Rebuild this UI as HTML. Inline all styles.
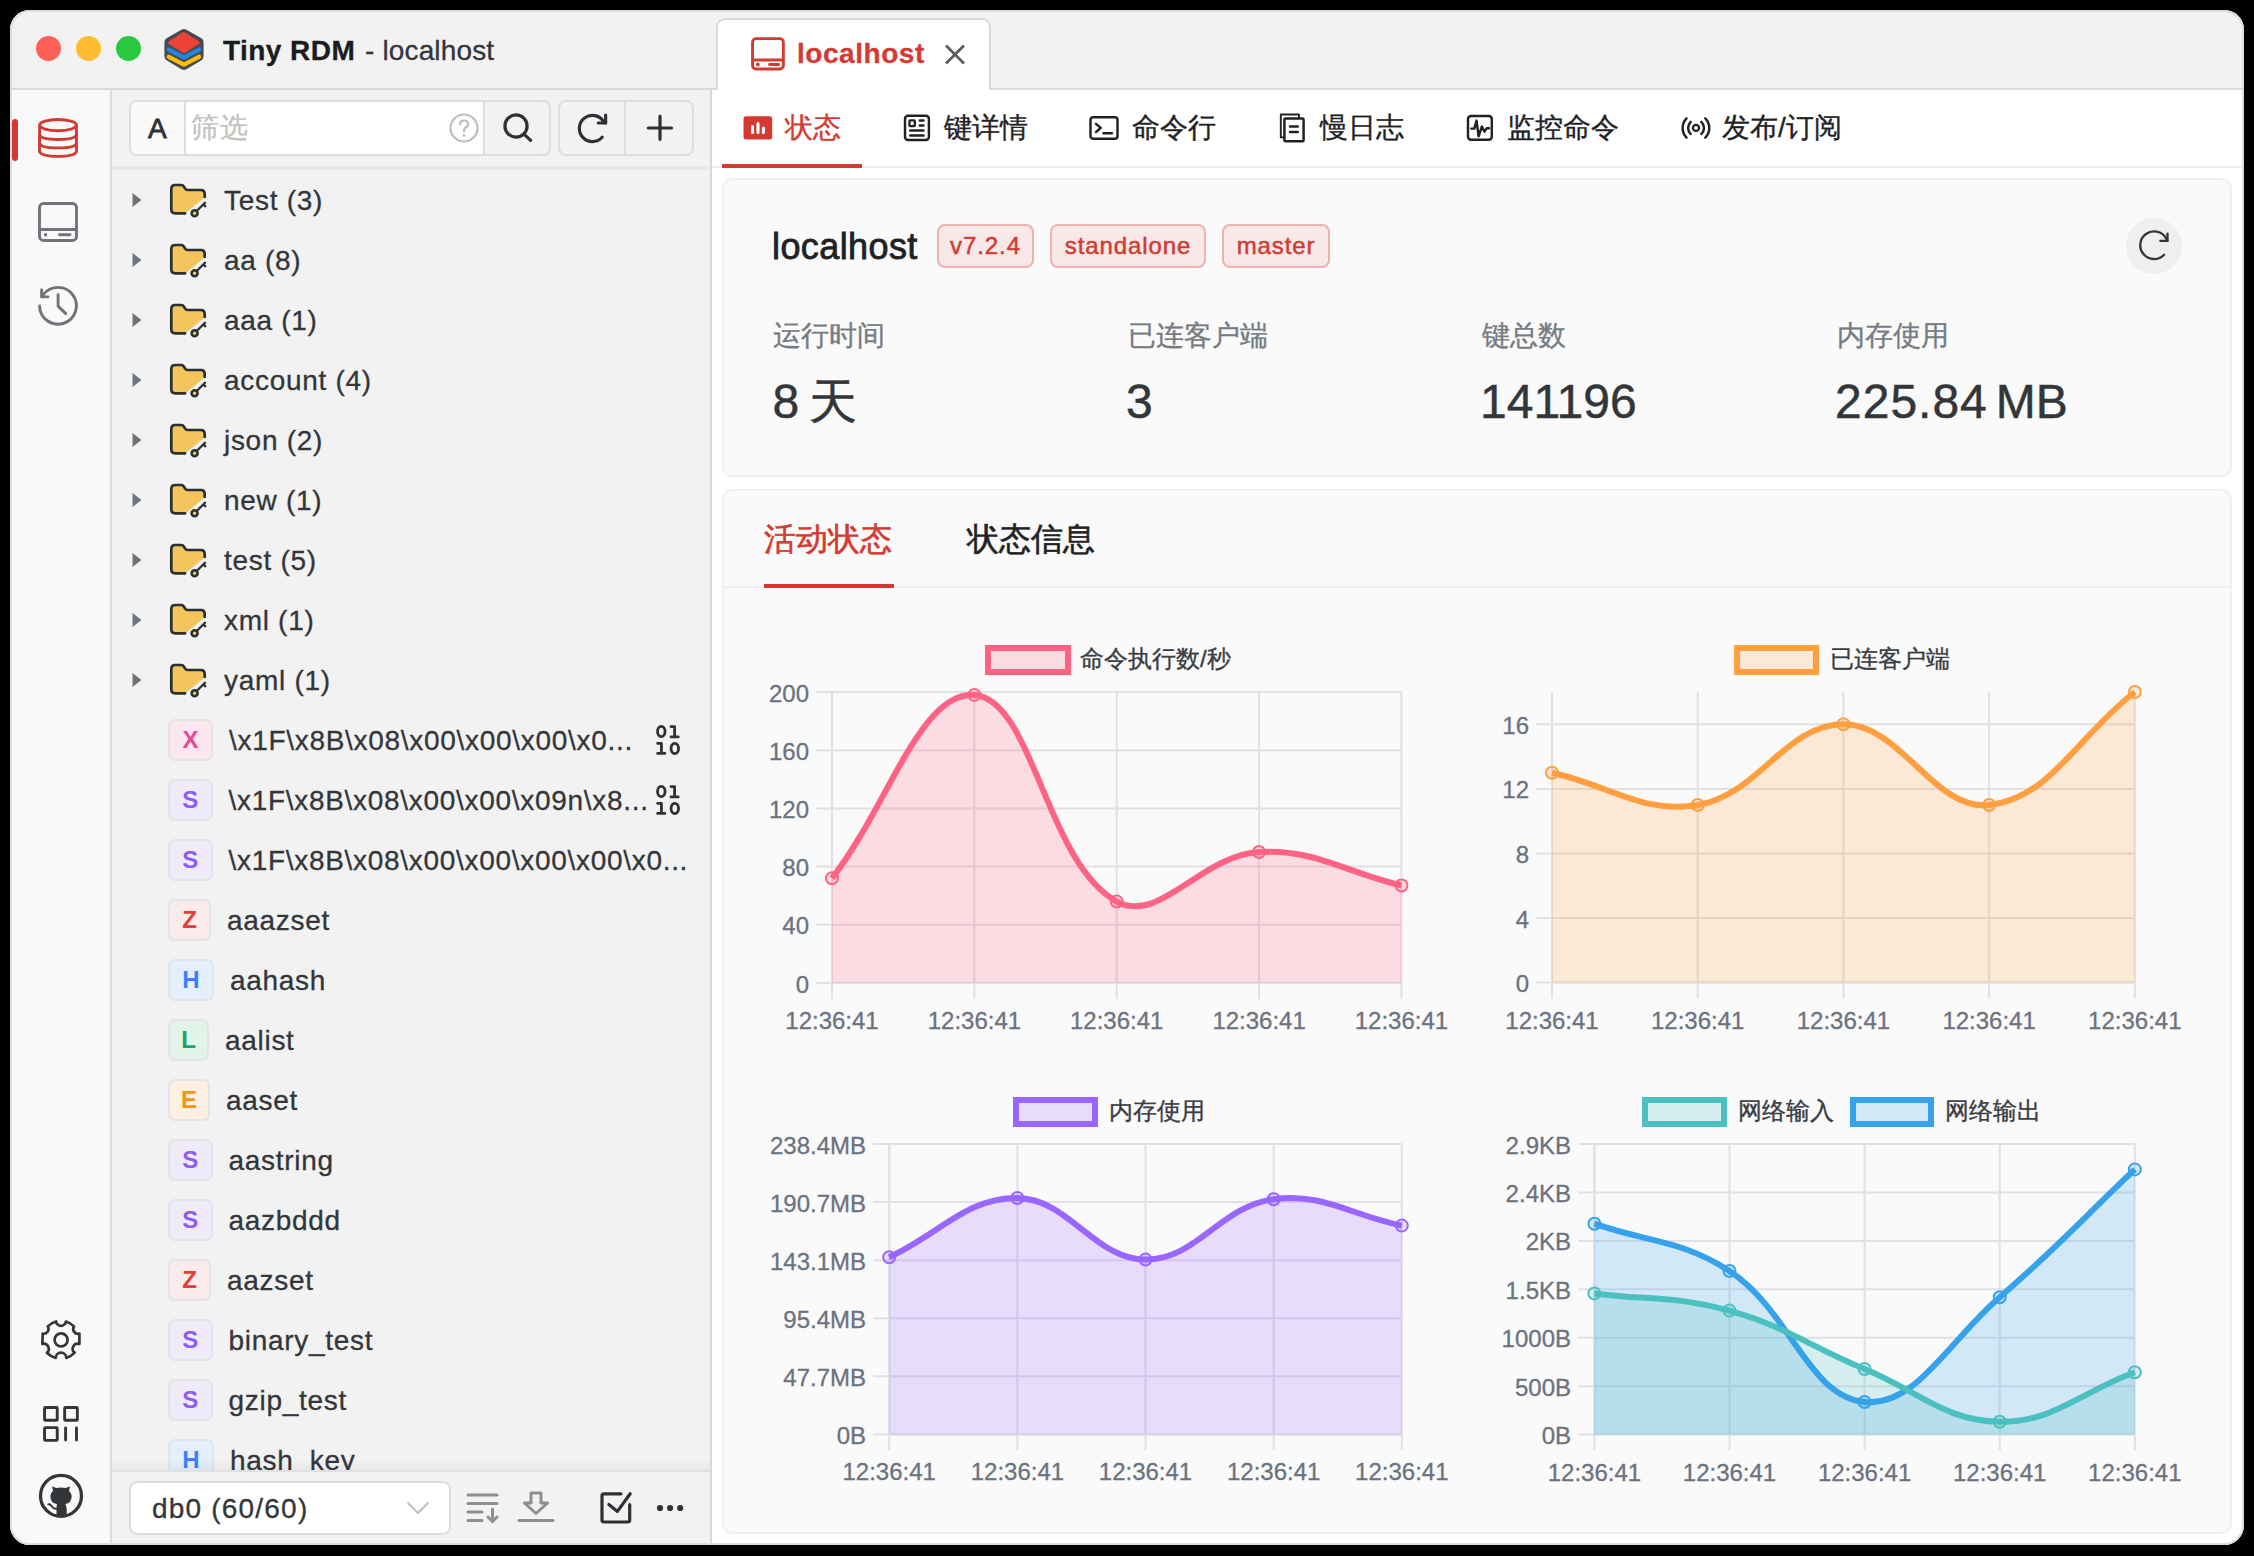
<!DOCTYPE html><html><head><meta charset="utf-8"><style>
*{box-sizing:border-box;margin:0;padding:0}
html,body{width:2254px;height:1556px;overflow:hidden;background:#000}
body{font-family:"Liberation Sans",sans-serif;color:#333639;position:relative}
.abs{position:absolute}
#win{position:absolute;left:0;top:0;width:2254px;height:1556px;clip-path:inset(10px 10px 11px 10px round 20px);background:#f2f2f2}
#frame{position:absolute;left:10px;top:10px;width:2234px;height:1535px;border:2px solid #dcdce1;border-radius:20px;z-index:50}
.tl{position:absolute;width:25px;height:25px;border-radius:50%;top:35.5px}
.t28{font-size:28px;line-height:34px;white-space:nowrap;letter-spacing:0.7px;-webkit-text-stroke:0.3px currentColor}
.row{position:absolute;left:112px;width:598px;height:60px}
.row .tx{position:absolute;top:13px;font-size:28px;line-height:34px;white-space:nowrap;color:#333639}
.badge{position:absolute;top:-21px;height:42px;border-radius:7px;border:2px solid #e3e3e8;font-weight:bold;font-size:24px;line-height:38px;text-align:center}
.subtab{position:absolute;top:113px;font-size:28px;line-height:30px;white-space:nowrap;color:#1f2225;-webkit-text-stroke:0.35px currentColor}
.stat-l{position:absolute;top:320px;font-size:28px;line-height:32px;color:#767c82;white-space:nowrap;-webkit-text-stroke:0.35px currentColor}
.stat-v{position:absolute;top:371.5px;font-size:48px;line-height:60px;color:#333639;white-space:nowrap;-webkit-text-stroke:0.5px currentColor}
.tag{position:absolute;top:224px;height:44px;border:2px solid #f0b2ae;background:#f9e8e8;color:#d33a31;border-radius:8px;font-size:24px;line-height:40px;text-align:center;white-space:nowrap;letter-spacing:0.9px;-webkit-text-stroke:0.5px currentColor}
</style></head><body><div id="win"><div class="abs" style="left:10px;top:10px;width:2234px;height:79px;background:#f2f2f2"></div><div class="abs" style="left:10px;top:88px;width:2234px;height:2px;background:#d9d9dc"></div><div class="tl" style="left:35.5px;background:#fe5f57"></div><div class="tl" style="left:75.5px;background:#febc2e"></div><div class="tl" style="left:115.5px;background:#28c840"></div><svg class="abs" style="left:155px;top:20px" width="60" height="60" viewBox="0 0 60 60">
<path d="M26.4 9.7 Q28.9 8.3 31.4 9.7 L46.1 18.1 Q48.6 19.5 48.6 22.4 L48.6 36.1 Q48.6 39 46.1 40.4 L31.4 49.3 Q28.9 50.7 26.4 49.3 L11.9 40.4 Q9.4 39 9.4 36.1 L9.4 22.4 Q9.4 19.5 11.9 18.1 Z" fill="#474a4f"/>
<polyline points="13.8,36.8 28.9,44.6 44,36.8" fill="none" stroke="#fbbd0b" stroke-width="4.3" stroke-linecap="round" stroke-linejoin="round"/>
<polyline points="13.8,29.6 28.9,37.4 44,29.6" fill="none" stroke="#1f88e6" stroke-width="4.3" stroke-linecap="round" stroke-linejoin="round"/>
<polygon points="14.6,22.8 28.9,13.6 43.2,22.8 28.9,31.7" fill="#ee4238" stroke="#ee4238" stroke-width="3" stroke-linejoin="round"/>
</svg><div class="abs t28" style="left:223px;top:33.5px;color:#1b1c1e;letter-spacing:0"><b style="letter-spacing:0.45px">Tiny RDM</b> <span style="color:#333639;letter-spacing:0.15px;margin-left:2px">- localhost</span></div><div class="abs" style="left:716px;top:18px;width:275px;height:76px;background:#fff;border:2px solid #d9d9dc;border-bottom:none;border-radius:9px 9px 0 0"></div><svg class="abs" style="left:745px;top:30px" width="50" height="50" viewBox="0 0 50 50" fill="none" stroke="#d33a31" stroke-width="2.9"><rect x="7.55" y="8.65" width="30.8" height="30.35" rx="3.5"/><line x1="7.55" y1="30" x2="38.35" y2="30"/><circle cx="12.85" cy="34.5" r="1.9" fill="#d33a31" stroke="none"/><line x1="24.6" y1="34.5" x2="33.5" y2="34.5" stroke-linecap="round"/></svg><div class="abs t28" style="left:797px;top:37px;color:#d33a31;font-weight:bold;letter-spacing:0.55px">localhost</div><svg class="abs" style="left:944px;top:44px" width="22" height="21" viewBox="0 0 22 21"><path d="M2 1.5 L20 19.5 M20 1.5 L2 19.5" stroke="#555a5f" stroke-width="2.6"/></svg><div class="abs" style="left:10px;top:90px;width:100px;height:1455px;background:#f9f9f9"></div><div class="abs" style="left:110px;top:90px;width:2px;height:1455px;background:#dcdcdf"></div><div class="abs" style="left:12px;top:119px;width:6px;height:42px;border-radius:3px;background:#d33a31"></div><svg class="abs" style="left:30px;top:110px" width="56" height="56" viewBox="0 0 56 56" fill="none" stroke="#d33a31" stroke-width="2.9"><ellipse cx="28" cy="15.1" rx="18.4" ry="5.6"/><path d="M9.6 15.1 L9.5 40.8 Q9.5 46.4 28 46.4 Q46.5 46.4 46.5 40.8 L46.4 15.1"/><path d="M9.6 24 Q9.6 29.5 28 29.5 Q46.4 29.5 46.4 24"/><path d="M9.5 32.4 Q9.5 37.9 28 37.9 Q46.5 37.9 46.5 32.4"/></svg><svg class="abs" style="left:30px;top:194px" width="56" height="56" viewBox="0 0 56 56" fill="none" stroke="#6f747a" stroke-width="2.9"><rect x="9.5" y="9.5" width="37" height="37" rx="4"/><line x1="9.5" y1="35.5" x2="46.5" y2="35.5"/><circle cx="15.6" cy="40.8" r="1.7" fill="#6f747a" stroke="none"/><line x1="29.5" y1="40.8" x2="40" y2="40.8" stroke-linecap="round"/></svg><svg class="abs" style="left:30px;top:278px" width="56" height="56" viewBox="0 0 56 56" fill="none" stroke="#6f747a" stroke-width="2.9" stroke-linecap="round" stroke-linejoin="round"><path d="M9.6 28 A18.4 18.4 0 1 0 13.3 16.7"/><path d="M11.6 11.9 V18.9 H18"/><path d="M28.1 16.6 V28.1 L35.8 35.6"/></svg><svg class="abs" style="left:33px;top:1312px" width="56" height="56" viewBox="0 0 56 56" fill="none" stroke="#333639" stroke-width="2.7" stroke-linejoin="round"><path d="M23 9.5 A5 5 0 0 0 32.9 9.5 A19 19 0 0 1 41 14.4 A4.8 4.8 0 0 0 46.4 21.6 L46.4 32 A5 5 0 0 0 41.7 40.7 A19 19 0 0 1 33.3 45.9 A5.3 5.3 0 0 0 22.7 45.9 A19 19 0 0 1 13.9 40.7 A5 5 0 0 0 9.4 32 L9.7 21.6 A4.8 4.8 0 0 0 14.8 14.4 A19 19 0 0 1 23 9.5 Z"/><circle cx="28.1" cy="27.9" r="6.5"/></svg><svg class="abs" style="left:33px;top:1396px" width="56" height="56" viewBox="0 0 56 56" fill="none" stroke="#333639" stroke-width="2.9" stroke-linejoin="round"><rect x="11.55" y="11.55" width="12.7" height="12.7" rx="0.8"/><rect x="31.65" y="11.55" width="12.7" height="12.7" rx="0.8"/><rect x="11.55" y="31.65" width="12.7" height="12.7" rx="0.8"/><path d="M32.6 32 V44 M43.5 32 V44" stroke-linecap="round"/></svg><svg class="abs" style="left:33px;top:1468px" width="56" height="56" viewBox="0 0 56 56"><circle cx="28" cy="27.9" r="20.5" fill="none" stroke="#333639" stroke-width="3.3"/><path d="M19 18.3 L23.3 20 Q28 19.2 32.7 20 L37 18.3 L36 22.8 Q38.6 25.4 38.6 28.6 Q38.6 35.3 32.2 36 Q33.7 38 33.7 41 V47.8 H23.5 V40.5 Q23.5 38 24 36 Q17.4 35.3 17.4 28.6 Q17.4 25.4 20 22.8 Z" fill="#333639"/><path d="M15.2 36.3 Q17.3 35.8 18.8 38.2 Q20.3 41.2 23.6 40.6" fill="none" stroke="#333639" stroke-width="1.9" stroke-linecap="round"/></svg><div class="abs" style="left:129px;top:100px;width:422px;height:56px;border:2px solid #dcdce3;border-radius:8px;background:#f2f2f2;overflow:hidden"><div class="abs" style="left:0;top:0;width:55px;height:52px;background:#fafafa;border-right:2px solid #dcdce3"></div><div class="abs" style="left:55px;top:0;width:299px;height:52px;background:#fff;border-right:2px solid #dcdce3"></div></div><div class="abs" style="left:148px;top:112.5px;font-size:28px;line-height:32px;color:#2d3034;-webkit-text-stroke:0.8px #2d3034">A</div><div class="abs t28" style="left:191px;top:111px;color:#c2c2c2">筛选</div><svg class="abs" style="left:448px;top:112px" width="32" height="32" viewBox="0 0 32 32" fill="none" stroke="#bdbdbd" stroke-width="2.2"><circle cx="16" cy="16" r="13.5"/><path d="M12 12.5 Q12 8.5 16 8.5 Q20 8.5 20 12 Q20 14.5 17.5 15.5 Q16 16.3 16 18.5 V19.5" stroke-linecap="round"/><circle cx="16" cy="23.5" r="1.3" fill="#bdbdbd" stroke="none"/></svg><svg class="abs" style="left:500px;top:110px" width="34" height="34" viewBox="0 0 34 34" fill="none" stroke="#2d3034" stroke-width="3.2" stroke-linecap="round"><circle cx="16" cy="16" r="11.1"/><path d="M24.3 24.3 L30.6 30.3"/></svg><div class="abs" style="left:558px;top:100px;width:136px;height:56px;border:2px solid #dcdce3;border-radius:8px;background:#f2f2f2"><div class="abs" style="left:64px;top:0;width:2px;height:52px;background:#dcdce3"></div></div><svg class="abs" style="left:576px;top:111px" width="34" height="34" viewBox="0 0 34 34" fill="none" stroke="#2d3034" stroke-width="3.2" stroke-linecap="round" stroke-linejoin="round"><path d="M26.2 26.2 A13.1 13.1 0 1 1 27.6 10.6 L29.6 12"/><path d="M29.6 4 V12 H22.3"/></svg><svg class="abs" style="left:645px;top:113px" width="30" height="30" viewBox="0 0 30 30" stroke="#2d3034" stroke-width="3.2" stroke-linecap="round"><path d="M15 3.2 V26.3 M3.3 15 H26.5"/></svg><div class="abs" style="left:112px;top:166px;width:598px;height:4px;background:#e8e8e8"></div><div class="abs" style="left:710px;top:90px;width:2px;height:1455px;background:#d8d8d8;z-index:5"></div><div class="abs" style="left:112px;top:168px;width:598px;height:1302px;overflow:hidden"><div class="abs" style="left:-112px;top:32px;width:598px;height:0"><svg class="abs" style="left:132px;top:-7px" width="10" height="14" viewBox="0 0 10 14"><path d="M0.5 0 L9.5 7 L0.5 14 Z" fill="#6f757c"/></svg><svg class="abs" style="left:169px;top:-18px" width="40" height="36" viewBox="0 0 40 36"><path d="M2.3 7 Q2.3 3 6.3 3 H12.5 Q13.8 3 14.6 4.2 L16.5 7 Q17.3 8 18.6 8 H31.7 Q35.7 8 35.7 12 V15.3 L16.6 31.3 H6.3 Q2.3 31.3 2.3 27.3 Z" fill="#f3c55c"/><path d="M16.1 31.3 H6.3 Q2.3 31.3 2.3 27.3 V7 Q2.3 3 6.3 3 H12.5 Q13.8 3 14.6 4.2 L16.5 7 Q17.3 8 18.6 8 H31.7 Q35.7 8 35.7 12 V14.9" fill="none" stroke="#2a2f35" stroke-width="2.7" stroke-linecap="round" stroke-linejoin="round"/><circle cx="25.6" cy="31.3" r="3" fill="#f5c65c" stroke="#2a2f35" stroke-width="2.5"/><path d="M27.7 29 L36 20.7 M34.4 22.4 L36.3 24.3" stroke="#2a2f35" stroke-width="2.3" stroke-linecap="round"/></svg><div class="abs t28" style="left:224px;top:-16px">Test (3)</div></div><div class="abs" style="left:-112px;top:92px;width:598px;height:0"><svg class="abs" style="left:132px;top:-7px" width="10" height="14" viewBox="0 0 10 14"><path d="M0.5 0 L9.5 7 L0.5 14 Z" fill="#6f757c"/></svg><svg class="abs" style="left:169px;top:-18px" width="40" height="36" viewBox="0 0 40 36"><path d="M2.3 7 Q2.3 3 6.3 3 H12.5 Q13.8 3 14.6 4.2 L16.5 7 Q17.3 8 18.6 8 H31.7 Q35.7 8 35.7 12 V15.3 L16.6 31.3 H6.3 Q2.3 31.3 2.3 27.3 Z" fill="#f3c55c"/><path d="M16.1 31.3 H6.3 Q2.3 31.3 2.3 27.3 V7 Q2.3 3 6.3 3 H12.5 Q13.8 3 14.6 4.2 L16.5 7 Q17.3 8 18.6 8 H31.7 Q35.7 8 35.7 12 V14.9" fill="none" stroke="#2a2f35" stroke-width="2.7" stroke-linecap="round" stroke-linejoin="round"/><circle cx="25.6" cy="31.3" r="3" fill="#f5c65c" stroke="#2a2f35" stroke-width="2.5"/><path d="M27.7 29 L36 20.7 M34.4 22.4 L36.3 24.3" stroke="#2a2f35" stroke-width="2.3" stroke-linecap="round"/></svg><div class="abs t28" style="left:224px;top:-16px">aa (8)</div></div><div class="abs" style="left:-112px;top:152px;width:598px;height:0"><svg class="abs" style="left:132px;top:-7px" width="10" height="14" viewBox="0 0 10 14"><path d="M0.5 0 L9.5 7 L0.5 14 Z" fill="#6f757c"/></svg><svg class="abs" style="left:169px;top:-18px" width="40" height="36" viewBox="0 0 40 36"><path d="M2.3 7 Q2.3 3 6.3 3 H12.5 Q13.8 3 14.6 4.2 L16.5 7 Q17.3 8 18.6 8 H31.7 Q35.7 8 35.7 12 V15.3 L16.6 31.3 H6.3 Q2.3 31.3 2.3 27.3 Z" fill="#f3c55c"/><path d="M16.1 31.3 H6.3 Q2.3 31.3 2.3 27.3 V7 Q2.3 3 6.3 3 H12.5 Q13.8 3 14.6 4.2 L16.5 7 Q17.3 8 18.6 8 H31.7 Q35.7 8 35.7 12 V14.9" fill="none" stroke="#2a2f35" stroke-width="2.7" stroke-linecap="round" stroke-linejoin="round"/><circle cx="25.6" cy="31.3" r="3" fill="#f5c65c" stroke="#2a2f35" stroke-width="2.5"/><path d="M27.7 29 L36 20.7 M34.4 22.4 L36.3 24.3" stroke="#2a2f35" stroke-width="2.3" stroke-linecap="round"/></svg><div class="abs t28" style="left:224px;top:-16px">aaa (1)</div></div><div class="abs" style="left:-112px;top:212px;width:598px;height:0"><svg class="abs" style="left:132px;top:-7px" width="10" height="14" viewBox="0 0 10 14"><path d="M0.5 0 L9.5 7 L0.5 14 Z" fill="#6f757c"/></svg><svg class="abs" style="left:169px;top:-18px" width="40" height="36" viewBox="0 0 40 36"><path d="M2.3 7 Q2.3 3 6.3 3 H12.5 Q13.8 3 14.6 4.2 L16.5 7 Q17.3 8 18.6 8 H31.7 Q35.7 8 35.7 12 V15.3 L16.6 31.3 H6.3 Q2.3 31.3 2.3 27.3 Z" fill="#f3c55c"/><path d="M16.1 31.3 H6.3 Q2.3 31.3 2.3 27.3 V7 Q2.3 3 6.3 3 H12.5 Q13.8 3 14.6 4.2 L16.5 7 Q17.3 8 18.6 8 H31.7 Q35.7 8 35.7 12 V14.9" fill="none" stroke="#2a2f35" stroke-width="2.7" stroke-linecap="round" stroke-linejoin="round"/><circle cx="25.6" cy="31.3" r="3" fill="#f5c65c" stroke="#2a2f35" stroke-width="2.5"/><path d="M27.7 29 L36 20.7 M34.4 22.4 L36.3 24.3" stroke="#2a2f35" stroke-width="2.3" stroke-linecap="round"/></svg><div class="abs t28" style="left:224px;top:-16px">account (4)</div></div><div class="abs" style="left:-112px;top:272px;width:598px;height:0"><svg class="abs" style="left:132px;top:-7px" width="10" height="14" viewBox="0 0 10 14"><path d="M0.5 0 L9.5 7 L0.5 14 Z" fill="#6f757c"/></svg><svg class="abs" style="left:169px;top:-18px" width="40" height="36" viewBox="0 0 40 36"><path d="M2.3 7 Q2.3 3 6.3 3 H12.5 Q13.8 3 14.6 4.2 L16.5 7 Q17.3 8 18.6 8 H31.7 Q35.7 8 35.7 12 V15.3 L16.6 31.3 H6.3 Q2.3 31.3 2.3 27.3 Z" fill="#f3c55c"/><path d="M16.1 31.3 H6.3 Q2.3 31.3 2.3 27.3 V7 Q2.3 3 6.3 3 H12.5 Q13.8 3 14.6 4.2 L16.5 7 Q17.3 8 18.6 8 H31.7 Q35.7 8 35.7 12 V14.9" fill="none" stroke="#2a2f35" stroke-width="2.7" stroke-linecap="round" stroke-linejoin="round"/><circle cx="25.6" cy="31.3" r="3" fill="#f5c65c" stroke="#2a2f35" stroke-width="2.5"/><path d="M27.7 29 L36 20.7 M34.4 22.4 L36.3 24.3" stroke="#2a2f35" stroke-width="2.3" stroke-linecap="round"/></svg><div class="abs t28" style="left:224px;top:-16px">json (2)</div></div><div class="abs" style="left:-112px;top:332px;width:598px;height:0"><svg class="abs" style="left:132px;top:-7px" width="10" height="14" viewBox="0 0 10 14"><path d="M0.5 0 L9.5 7 L0.5 14 Z" fill="#6f757c"/></svg><svg class="abs" style="left:169px;top:-18px" width="40" height="36" viewBox="0 0 40 36"><path d="M2.3 7 Q2.3 3 6.3 3 H12.5 Q13.8 3 14.6 4.2 L16.5 7 Q17.3 8 18.6 8 H31.7 Q35.7 8 35.7 12 V15.3 L16.6 31.3 H6.3 Q2.3 31.3 2.3 27.3 Z" fill="#f3c55c"/><path d="M16.1 31.3 H6.3 Q2.3 31.3 2.3 27.3 V7 Q2.3 3 6.3 3 H12.5 Q13.8 3 14.6 4.2 L16.5 7 Q17.3 8 18.6 8 H31.7 Q35.7 8 35.7 12 V14.9" fill="none" stroke="#2a2f35" stroke-width="2.7" stroke-linecap="round" stroke-linejoin="round"/><circle cx="25.6" cy="31.3" r="3" fill="#f5c65c" stroke="#2a2f35" stroke-width="2.5"/><path d="M27.7 29 L36 20.7 M34.4 22.4 L36.3 24.3" stroke="#2a2f35" stroke-width="2.3" stroke-linecap="round"/></svg><div class="abs t28" style="left:224px;top:-16px">new (1)</div></div><div class="abs" style="left:-112px;top:392px;width:598px;height:0"><svg class="abs" style="left:132px;top:-7px" width="10" height="14" viewBox="0 0 10 14"><path d="M0.5 0 L9.5 7 L0.5 14 Z" fill="#6f757c"/></svg><svg class="abs" style="left:169px;top:-18px" width="40" height="36" viewBox="0 0 40 36"><path d="M2.3 7 Q2.3 3 6.3 3 H12.5 Q13.8 3 14.6 4.2 L16.5 7 Q17.3 8 18.6 8 H31.7 Q35.7 8 35.7 12 V15.3 L16.6 31.3 H6.3 Q2.3 31.3 2.3 27.3 Z" fill="#f3c55c"/><path d="M16.1 31.3 H6.3 Q2.3 31.3 2.3 27.3 V7 Q2.3 3 6.3 3 H12.5 Q13.8 3 14.6 4.2 L16.5 7 Q17.3 8 18.6 8 H31.7 Q35.7 8 35.7 12 V14.9" fill="none" stroke="#2a2f35" stroke-width="2.7" stroke-linecap="round" stroke-linejoin="round"/><circle cx="25.6" cy="31.3" r="3" fill="#f5c65c" stroke="#2a2f35" stroke-width="2.5"/><path d="M27.7 29 L36 20.7 M34.4 22.4 L36.3 24.3" stroke="#2a2f35" stroke-width="2.3" stroke-linecap="round"/></svg><div class="abs t28" style="left:224px;top:-16px">test (5)</div></div><div class="abs" style="left:-112px;top:452px;width:598px;height:0"><svg class="abs" style="left:132px;top:-7px" width="10" height="14" viewBox="0 0 10 14"><path d="M0.5 0 L9.5 7 L0.5 14 Z" fill="#6f757c"/></svg><svg class="abs" style="left:169px;top:-18px" width="40" height="36" viewBox="0 0 40 36"><path d="M2.3 7 Q2.3 3 6.3 3 H12.5 Q13.8 3 14.6 4.2 L16.5 7 Q17.3 8 18.6 8 H31.7 Q35.7 8 35.7 12 V15.3 L16.6 31.3 H6.3 Q2.3 31.3 2.3 27.3 Z" fill="#f3c55c"/><path d="M16.1 31.3 H6.3 Q2.3 31.3 2.3 27.3 V7 Q2.3 3 6.3 3 H12.5 Q13.8 3 14.6 4.2 L16.5 7 Q17.3 8 18.6 8 H31.7 Q35.7 8 35.7 12 V14.9" fill="none" stroke="#2a2f35" stroke-width="2.7" stroke-linecap="round" stroke-linejoin="round"/><circle cx="25.6" cy="31.3" r="3" fill="#f5c65c" stroke="#2a2f35" stroke-width="2.5"/><path d="M27.7 29 L36 20.7 M34.4 22.4 L36.3 24.3" stroke="#2a2f35" stroke-width="2.3" stroke-linecap="round"/></svg><div class="abs t28" style="left:224px;top:-16px">xml (1)</div></div><div class="abs" style="left:-112px;top:512px;width:598px;height:0"><svg class="abs" style="left:132px;top:-7px" width="10" height="14" viewBox="0 0 10 14"><path d="M0.5 0 L9.5 7 L0.5 14 Z" fill="#6f757c"/></svg><svg class="abs" style="left:169px;top:-18px" width="40" height="36" viewBox="0 0 40 36"><path d="M2.3 7 Q2.3 3 6.3 3 H12.5 Q13.8 3 14.6 4.2 L16.5 7 Q17.3 8 18.6 8 H31.7 Q35.7 8 35.7 12 V15.3 L16.6 31.3 H6.3 Q2.3 31.3 2.3 27.3 Z" fill="#f3c55c"/><path d="M16.1 31.3 H6.3 Q2.3 31.3 2.3 27.3 V7 Q2.3 3 6.3 3 H12.5 Q13.8 3 14.6 4.2 L16.5 7 Q17.3 8 18.6 8 H31.7 Q35.7 8 35.7 12 V14.9" fill="none" stroke="#2a2f35" stroke-width="2.7" stroke-linecap="round" stroke-linejoin="round"/><circle cx="25.6" cy="31.3" r="3" fill="#f5c65c" stroke="#2a2f35" stroke-width="2.5"/><path d="M27.7 29 L36 20.7 M34.4 22.4 L36.3 24.3" stroke="#2a2f35" stroke-width="2.3" stroke-linecap="round"/></svg><div class="abs t28" style="left:224px;top:-16px">yaml (1)</div></div><div class="abs" style="left:-112px;top:572px;width:598px;height:0"><div class="badge" style="left:168px;width:45.0px;background:#fce6f0;color:#e84794">X</div><div class="abs t28" style="left:229.0px;top:-16px">\x1F\x8B\x08\x00\x00\x00\x0...</div><svg class="abs" style="left:654px;top:-17px" width="28" height="34" viewBox="0 0 28 34" fill="none" stroke="#2d3034" stroke-width="2.8" stroke-linecap="round" stroke-linejoin="round"><ellipse cx="7.3" cy="8.5" rx="3.75" ry="5.05"/><path d="M17 3.6 H20.6 V13.9 M17 13.9 H24.2"/><path d="M3.6 20.3 H7.4 V30.4 M3.6 30.4 H10.8"/><ellipse cx="20.8" cy="25.5" rx="3.75" ry="5.05"/></svg></div><div class="abs" style="left:-112px;top:632px;width:598px;height:0"><div class="badge" style="left:168px;width:44.5px;background:#f0ebfa;color:#8c5cf5">S</div><div class="abs t28" style="left:228.5px;top:-16px">\x1F\x8B\x08\x00\x00\x09n\x8...</div><svg class="abs" style="left:654px;top:-17px" width="28" height="34" viewBox="0 0 28 34" fill="none" stroke="#2d3034" stroke-width="2.8" stroke-linecap="round" stroke-linejoin="round"><ellipse cx="7.3" cy="8.5" rx="3.75" ry="5.05"/><path d="M17 3.6 H20.6 V13.9 M17 13.9 H24.2"/><path d="M3.6 20.3 H7.4 V30.4 M3.6 30.4 H10.8"/><ellipse cx="20.8" cy="25.5" rx="3.75" ry="5.05"/></svg></div><div class="abs" style="left:-112px;top:692px;width:598px;height:0"><div class="badge" style="left:168px;width:44.5px;background:#f0ebfa;color:#8c5cf5">S</div><div class="abs t28" style="left:228.5px;top:-16px">\x1F\x8B\x08\x00\x00\x00\x00\x0...</div></div><div class="abs" style="left:-112px;top:752px;width:598px;height:0"><div class="badge" style="left:168px;width:43.0px;background:#fbeaea;color:#e23d3b">Z</div><div class="abs t28" style="left:227.0px;top:-16px">aaazset</div></div><div class="abs" style="left:-112px;top:812px;width:598px;height:0"><div class="badge" style="left:168px;width:46.0px;background:#e4effc;color:#3a82f6">H</div><div class="abs t28" style="left:230.0px;top:-16px">aahash</div></div><div class="abs" style="left:-112px;top:872px;width:598px;height:0"><div class="badge" style="left:168px;width:41.0px;background:#e2f3ea;color:#17a56b">L</div><div class="abs t28" style="left:225.0px;top:-16px">aalist</div></div><div class="abs" style="left:-112px;top:932px;width:598px;height:0"><div class="badge" style="left:168px;width:42.0px;background:#fdf0e1;color:#f1960e">E</div><div class="abs t28" style="left:226.0px;top:-16px">aaset</div></div><div class="abs" style="left:-112px;top:992px;width:598px;height:0"><div class="badge" style="left:168px;width:44.5px;background:#f0ebfa;color:#8c5cf5">S</div><div class="abs t28" style="left:228.5px;top:-16px">aastring</div></div><div class="abs" style="left:-112px;top:1052px;width:598px;height:0"><div class="badge" style="left:168px;width:44.5px;background:#f0ebfa;color:#8c5cf5">S</div><div class="abs t28" style="left:228.5px;top:-16px">aazbddd</div></div><div class="abs" style="left:-112px;top:1112px;width:598px;height:0"><div class="badge" style="left:168px;width:43.0px;background:#fbeaea;color:#e23d3b">Z</div><div class="abs t28" style="left:227.0px;top:-16px">aazset</div></div><div class="abs" style="left:-112px;top:1172px;width:598px;height:0"><div class="badge" style="left:168px;width:44.5px;background:#f0ebfa;color:#8c5cf5">S</div><div class="abs t28" style="left:228.5px;top:-16px">binary_test</div></div><div class="abs" style="left:-112px;top:1232px;width:598px;height:0"><div class="badge" style="left:168px;width:44.5px;background:#f0ebfa;color:#8c5cf5">S</div><div class="abs t28" style="left:228.5px;top:-16px">gzip_test</div></div><div class="abs" style="left:-112px;top:1292px;width:598px;height:0"><div class="badge" style="left:168px;width:46.0px;background:#e4effc;color:#3a82f6">H</div><div class="abs t28" style="left:230.0px;top:-16px">hash_key</div></div></div><div class="abs" style="left:112px;top:1459px;width:598px;height:11px;background:linear-gradient(to bottom,rgba(0,0,0,0),rgba(0,0,0,0.045))"></div><div class="abs" style="left:112px;top:1470px;width:598px;height:2px;background:#e0e0e4"></div><div class="abs" style="left:129px;top:1481px;width:322px;height:54px;border:2px solid #dcdce3;border-radius:8px;background:#fff"></div><div class="abs t28" style="left:152px;top:1492px;letter-spacing:1.2px">db0 (60/60)</div><svg class="abs" style="left:406px;top:1501px" width="24" height="14" viewBox="0 0 24 14" fill="none" stroke="#c2c2c2" stroke-width="2.2"><path d="M1.5 1.5 L12 12 L22.5 1.5"/></svg><svg class="abs" style="left:466px;top:1492px" width="34" height="32" viewBox="0 0 34 32" fill="none" stroke="#8e8e8e" stroke-width="3" stroke-linecap="round"><path d="M2 3 H31 M2 11.5 H31 M2 20 H16 M2 28.5 H16 M26.5 17 V29.5 M22 25 L26.5 29.5 L31 25"/></svg><svg class="abs" style="left:517px;top:1491px" width="38" height="32" viewBox="0 0 38 32" fill="none" stroke="#8e8e8e" stroke-width="3" stroke-linecap="round" stroke-linejoin="round"><path d="M14 2 H24 V12 H30.5 L19 22.5 L7.5 12 H14 Z"/><path d="M2 29.5 H36"/></svg><svg class="abs" style="left:599px;top:1491px" width="36" height="36" viewBox="0 0 36 36" fill="none" stroke="#2d3034" stroke-width="3.2" stroke-linecap="round" stroke-linejoin="round"><path d="M30.7 13.5 V29 Q30.7 31 28.7 31 H5 Q3 31 3 29 V4.8 Q3 2.8 5 2.8 H22"/><path d="M9.9 13.5 L18.4 20.4 L31.2 2.8"/></svg><svg class="abs" style="left:655px;top:1503px" width="30" height="10" viewBox="0 0 30 10" fill="#2d3034"><circle cx="5" cy="5" r="3.1"/><circle cx="15.1" cy="5" r="3.1"/><circle cx="25.2" cy="5" r="3.1"/></svg><div class="abs" style="left:712px;top:90px;width:1532px;height:1455px;background:#fff"></div><div class="abs" style="left:718px;top:86px;width:271px;height:6px;background:#fff"></div><div class="abs" style="left:712px;top:166px;width:1532px;height:2px;background:#efeff5"></div><div class="abs" style="left:722px;top:164px;width:140px;height:4px;background:#d33a31"></div><svg class="abs" style="left:738px;top:108px" width="40" height="40" viewBox="0 0 40 40"><rect x="5.5" y="8.2" width="28.7" height="23.4" rx="2.5" fill="#d33a31"/><path d="M14.5 18.6 V24.4 M20 15.5 V24.4 M25.4 20.1 V24.4" stroke="#fff" stroke-width="3.1" stroke-linecap="round"/></svg><div class="subtab" style="left:785px;color:#d33a31">状态</div><svg class="abs" style="left:898px;top:108px" width="40" height="40" viewBox="0 0 40 40" fill="none" stroke="#1f2225" stroke-width="2.45" stroke-linecap="round"><rect x="7" y="7.65" width="23.9" height="24.25" rx="3"/><rect x="11.45" y="12.35" width="5.4" height="5.7" rx="0.8" stroke-width="2.3"/><path d="M21.8 12.5 H25.5 M21.8 17.5 H25.5 M12.2 22.5 H25.5 M12.2 27.4 H25.5"/></svg><div class="subtab" style="left:944px">键详情</div><svg class="abs" style="left:1084px;top:108px" width="40" height="40" viewBox="0 0 40 40" fill="none" stroke="#1f2225" stroke-width="2.45" stroke-linecap="round" stroke-linejoin="round"><rect x="6.5" y="9.2" width="27" height="21.5" rx="2.5"/><path d="M12 15.9 L16.8 19.9 L12 24 M19.5 25.3 H27.9"/></svg><div class="subtab" style="left:1132px">命令行</div><svg class="abs" style="left:1270px;top:105px" width="50" height="45" viewBox="0 0 50 45" fill="none" stroke="#1f2225" stroke-linejoin="round"><path d="M14 32.4 H10.8 V9.5 H29 V13" stroke-width="1.9"/><rect x="14.4" y="13.4" width="19.2" height="22.95" rx="1.2" stroke-width="2.5"/><path d="M20 21.5 H27.8 M20 27 H27.8" stroke-width="2.5" stroke-linecap="round"/></svg><div class="subtab" style="left:1320px">慢日志</div><svg class="abs" style="left:1460px;top:108px" width="40" height="40" viewBox="0 0 40 40" fill="none" stroke="#1f2225" stroke-width="2.45" stroke-linecap="round" stroke-linejoin="round"><rect x="8" y="8" width="23.8" height="23.8" rx="3"/><path d="M11.3 20.6 H14.3 L16.5 12.6 L18.6 28.3 L21.9 18.5 L24.5 23.7 L26.7 20.3 H29"/></svg><div class="subtab" style="left:1507px">监控命令</div><svg class="abs" style="left:1676px;top:108px" width="40" height="40" viewBox="0 0 40 40" fill="none" stroke="#1f2225" stroke-width="2.45" stroke-linecap="round"><path d="M10.5 10.3 Q6.6 14.5 6.6 19.9 Q6.6 25.3 10.5 29.6 M29.3 10.3 Q33.3 14.5 33.3 19.9 Q33.3 25.3 29.3 29.6 M14.7 13.9 Q12.1 16.5 12.1 19.9 Q12.1 23.3 14.7 26 M25.3 13.9 Q28 16.5 28 19.9 Q28 23.3 25.3 26"/><circle cx="20" cy="19.9" r="3.05" stroke-width="2.3"/></svg><div class="subtab" style="left:1722px">发布/订阅</div><div class="abs" style="left:722px;top:178px;width:1510px;height:299px;background:#fafafa;border:2px solid #efeff5;border-radius:10px"></div><div class="abs" style="left:772px;top:224.5px;font-size:36px;line-height:44px;color:#1f2225;white-space:nowrap;letter-spacing:0.4px;-webkit-text-stroke:0.8px currentColor">localhost</div><div class="tag" style="left:937px;width:97px">v7.2.4</div><div class="tag" style="left:1050px;width:156px">standalone</div><div class="tag" style="left:1222px;width:108px">master</div><div class="abs" style="left:2126px;top:218px;width:56px;height:56px;border-radius:50%;background:#efefef"></div><svg class="abs" style="left:2120px;top:212px" width="70" height="70" viewBox="0 0 70 70" fill="none" stroke="#333639" stroke-width="2.3" stroke-linecap="round" stroke-linejoin="round"><path d="M44.1 42.7 A13.8 13.8 0 1 1 46 26.3 L47.5 28.8"/><path d="M47.5 21.6 V28.8 H40.3"/></svg><div class="stat-l" style="left:773px">运行时间</div><div class="stat-v" style="left:772.5px">8<span style="margin-left:10px">天</span></div><div class="stat-l" style="left:1128px">已连客户端</div><div class="stat-v" style="left:1126.0px">3</div><div class="stat-l" style="left:1482px">键总数</div><div class="stat-v" style="left:1480.0px">141196</div><div class="stat-l" style="left:1837px">内存使用</div><div class="stat-v" style="left:1835.0px"><span style="letter-spacing:1px">225.84</span><span style="margin-left:8px">MB</span></div><div class="abs" style="left:722px;top:489px;width:1510px;height:1045px;background:#fafafa;border:2px solid #efeff5;border-radius:10px"></div><div class="abs" style="left:724px;top:586px;width:1506px;height:2px;background:#efeff5"></div><div class="abs" style="left:764px;top:584px;width:130px;height:4px;background:#d33a31"></div><div class="abs" style="left:764px;top:519px;font-size:32px;line-height:40px;color:#d33a31;-webkit-text-stroke:0.6px currentColor;white-space:nowrap">活动状态</div><div class="abs" style="left:967px;top:519px;font-size:32px;line-height:40px;color:#1f2225;-webkit-text-stroke:0.6px currentColor;white-space:nowrap">状态信息</div><svg class="abs" style="left:0;top:0" width="2254" height="1556" viewBox="0 0 2254 1556" font-family="Liberation Sans, sans-serif"><g stroke="#e0e0e6" stroke-width="2"><line x1="816.0" y1="983.0" x2="1401.4" y2="983.0"/><line x1="816.0" y1="924.8" x2="1401.4" y2="924.8"/><line x1="816.0" y1="866.6" x2="1401.4" y2="866.6"/><line x1="816.0" y1="808.4" x2="1401.4" y2="808.4"/><line x1="816.0" y1="750.2" x2="1401.4" y2="750.2"/><line x1="816.0" y1="692.0" x2="1401.4" y2="692.0"/><line x1="832.0" y1="692.0" x2="832.0" y2="999.0"/><line x1="974.4" y1="692.0" x2="974.4" y2="999.0"/><line x1="1116.7" y1="692.0" x2="1116.7" y2="999.0"/><line x1="1259.1" y1="692.0" x2="1259.1" y2="999.0"/><line x1="1401.4" y1="692.0" x2="1401.4" y2="999.0"/><line x1="832.0" y1="692.0" x2="832.0" y2="983.0"/><line x1="832.0" y1="983.0" x2="1401.4" y2="983.0"/></g><g fill="#6b7280" stroke="#6b7280" stroke-width="0.3" font-size="24"><text x="809.0" y="992.5" text-anchor="end">0</text><text x="809.0" y="934.3" text-anchor="end">40</text><text x="809.0" y="876.1" text-anchor="end">80</text><text x="809.0" y="817.9" text-anchor="end">120</text><text x="809.0" y="759.7" text-anchor="end">160</text><text x="809.0" y="701.5" text-anchor="end">200</text><text x="832.0" y="1029.0" text-anchor="middle">12:36:41</text><text x="974.4" y="1029.0" text-anchor="middle">12:36:41</text><text x="1116.7" y="1029.0" text-anchor="middle">12:36:41</text><text x="1259.1" y="1029.0" text-anchor="middle">12:36:41</text><text x="1401.4" y="1029.0" text-anchor="middle">12:36:41</text></g><path d="M832.00 878.24 C888.94 804.91 919.63 692.00 974.35 694.91 C1033.51 699.75 1045.55 862.25 1116.70 901.52 C1159.43 925.11 1201.25 855.30 1259.05 852.05 C1315.13 848.90 1344.46 872.13 1401.40 885.51 L1401.40 983.00 L832.00 983.00 Z" fill="rgba(255,99,132,0.2)"/><path d="M832.00 878.24 C888.94 804.91 919.63 692.00 974.35 694.91 C1033.51 699.75 1045.55 862.25 1116.70 901.52 C1159.43 925.11 1201.25 855.30 1259.05 852.05 C1315.13 848.90 1344.46 872.13 1401.40 885.51" fill="none" stroke="rgb(255,99,132)" stroke-width="6"/><circle cx="832.00" cy="878.24" r="6" fill="rgba(255,99,132,0.2)" stroke="rgb(255,99,132)" stroke-width="2"/><circle cx="974.35" cy="694.91" r="6" fill="rgba(255,99,132,0.2)" stroke="rgb(255,99,132)" stroke-width="2"/><circle cx="1116.70" cy="901.52" r="6" fill="rgba(255,99,132,0.2)" stroke="rgb(255,99,132)" stroke-width="2"/><circle cx="1259.05" cy="852.05" r="6" fill="rgba(255,99,132,0.2)" stroke="rgb(255,99,132)" stroke-width="2"/><circle cx="1401.40" cy="885.51" r="6" fill="rgba(255,99,132,0.2)" stroke="rgb(255,99,132)" stroke-width="2"/><rect x="988.0" y="648.0" width="80.0" height="24.0" fill="rgba(255,99,132,0.2)" stroke="rgb(255,99,132)" stroke-width="6"/><text x="1080.0" y="666.8" fill="#3a3d42" stroke="#3a3d42" stroke-width="0.35" font-size="24">命令执行数/秒</text><g stroke="#e0e0e6" stroke-width="2"><line x1="1536.0" y1="982.6" x2="2134.8" y2="982.6"/><line x1="1536.0" y1="918.0" x2="2134.8" y2="918.0"/><line x1="1536.0" y1="853.4" x2="2134.8" y2="853.4"/><line x1="1536.0" y1="788.9" x2="2134.8" y2="788.9"/><line x1="1536.0" y1="724.3" x2="2134.8" y2="724.3"/><line x1="1552.0" y1="692.0" x2="1552.0" y2="998.6"/><line x1="1697.7" y1="692.0" x2="1697.7" y2="998.6"/><line x1="1843.4" y1="692.0" x2="1843.4" y2="998.6"/><line x1="1989.1" y1="692.0" x2="1989.1" y2="998.6"/><line x1="2134.8" y1="692.0" x2="2134.8" y2="998.6"/><line x1="1552.0" y1="692.0" x2="1552.0" y2="982.6"/><line x1="1552.0" y1="982.6" x2="2134.8" y2="982.6"/></g><g fill="#6b7280" stroke="#6b7280" stroke-width="0.3" font-size="24"><text x="1529.0" y="992.1" text-anchor="end">0</text><text x="1529.0" y="927.5" text-anchor="end">4</text><text x="1529.0" y="862.9" text-anchor="end">8</text><text x="1529.0" y="798.4" text-anchor="end">12</text><text x="1529.0" y="733.8" text-anchor="end">16</text><text x="1552.0" y="1028.6" text-anchor="middle">12:36:41</text><text x="1697.7" y="1028.6" text-anchor="middle">12:36:41</text><text x="1843.4" y="1028.6" text-anchor="middle">12:36:41</text><text x="1989.1" y="1028.6" text-anchor="middle">12:36:41</text><text x="2134.8" y="1028.6" text-anchor="middle">12:36:41</text></g><path d="M1552.00 772.72 C1610.28 785.64 1642.62 814.17 1697.70 805.01 C1759.18 794.79 1785.12 724.29 1843.40 724.29 C1901.68 724.29 1933.78 811.14 1989.10 805.01 C2050.34 798.23 2076.52 737.20 2134.80 692.00 L2134.80 982.60 L1552.00 982.60 Z" fill="rgba(255,159,64,0.2)"/><path d="M1552.00 772.72 C1610.28 785.64 1642.62 814.17 1697.70 805.01 C1759.18 794.79 1785.12 724.29 1843.40 724.29 C1901.68 724.29 1933.78 811.14 1989.10 805.01 C2050.34 798.23 2076.52 737.20 2134.80 692.00" fill="none" stroke="rgb(255,159,64)" stroke-width="6"/><circle cx="1552.00" cy="772.72" r="6" fill="rgba(255,159,64,0.2)" stroke="rgb(255,159,64)" stroke-width="2"/><circle cx="1697.70" cy="805.01" r="6" fill="rgba(255,159,64,0.2)" stroke="rgb(255,159,64)" stroke-width="2"/><circle cx="1843.40" cy="724.29" r="6" fill="rgba(255,159,64,0.2)" stroke="rgb(255,159,64)" stroke-width="2"/><circle cx="1989.10" cy="805.01" r="6" fill="rgba(255,159,64,0.2)" stroke="rgb(255,159,64)" stroke-width="2"/><circle cx="2134.80" cy="692.00" r="6" fill="rgba(255,159,64,0.2)" stroke="rgb(255,159,64)" stroke-width="2"/><rect x="1737.0" y="648.0" width="79.0" height="24.0" fill="rgba(255,159,64,0.2)" stroke="rgb(255,159,64)" stroke-width="6"/><text x="1830.0" y="666.8" fill="#3a3d42" stroke="#3a3d42" stroke-width="0.35" font-size="24">已连客户端</text><g stroke="#e0e0e6" stroke-width="2"><line x1="873.2" y1="1434.4" x2="1401.8" y2="1434.4"/><line x1="873.2" y1="1376.3" x2="1401.8" y2="1376.3"/><line x1="873.2" y1="1318.2" x2="1401.8" y2="1318.2"/><line x1="873.2" y1="1260.2" x2="1401.8" y2="1260.2"/><line x1="873.2" y1="1202.1" x2="1401.8" y2="1202.1"/><line x1="873.2" y1="1144.0" x2="1401.8" y2="1144.0"/><line x1="889.2" y1="1144.0" x2="889.2" y2="1450.4"/><line x1="1017.4" y1="1144.0" x2="1017.4" y2="1450.4"/><line x1="1145.5" y1="1144.0" x2="1145.5" y2="1450.4"/><line x1="1273.7" y1="1144.0" x2="1273.7" y2="1450.4"/><line x1="1401.8" y1="1144.0" x2="1401.8" y2="1450.4"/><line x1="889.2" y1="1144.0" x2="889.2" y2="1434.4"/><line x1="889.2" y1="1434.4" x2="1401.8" y2="1434.4"/></g><g fill="#6b7280" stroke="#6b7280" stroke-width="0.3" font-size="24"><text x="866.0" y="1443.9" text-anchor="end">0B</text><text x="866.0" y="1385.8" text-anchor="end">47.7MB</text><text x="866.0" y="1327.7" text-anchor="end">95.4MB</text><text x="866.0" y="1269.7" text-anchor="end">143.1MB</text><text x="866.0" y="1211.6" text-anchor="end">190.7MB</text><text x="866.0" y="1153.5" text-anchor="end">238.4MB</text><text x="889.2" y="1480.4" text-anchor="middle">12:36:41</text><text x="1017.4" y="1480.4" text-anchor="middle">12:36:41</text><text x="1145.5" y="1480.4" text-anchor="middle">12:36:41</text><text x="1273.7" y="1480.4" text-anchor="middle">12:36:41</text><text x="1401.8" y="1480.4" text-anchor="middle">12:36:41</text></g><path d="M889.20 1257.26 C940.46 1233.56 966.27 1197.55 1017.35 1198.01 C1068.79 1198.48 1094.15 1259.35 1145.50 1259.58 C1196.67 1259.81 1220.35 1206.24 1273.65 1199.18 C1322.87 1192.65 1350.54 1215.03 1401.80 1225.60 L1401.80 1434.40 L889.20 1434.40 Z" fill="rgba(153,102,255,0.2)"/><path d="M889.20 1257.26 C940.46 1233.56 966.27 1197.55 1017.35 1198.01 C1068.79 1198.48 1094.15 1259.35 1145.50 1259.58 C1196.67 1259.81 1220.35 1206.24 1273.65 1199.18 C1322.87 1192.65 1350.54 1215.03 1401.80 1225.60" fill="none" stroke="rgb(153,102,255)" stroke-width="6"/><circle cx="889.20" cy="1257.26" r="6" fill="rgba(153,102,255,0.2)" stroke="rgb(153,102,255)" stroke-width="2"/><circle cx="1017.35" cy="1198.01" r="6" fill="rgba(153,102,255,0.2)" stroke="rgb(153,102,255)" stroke-width="2"/><circle cx="1145.50" cy="1259.58" r="6" fill="rgba(153,102,255,0.2)" stroke="rgb(153,102,255)" stroke-width="2"/><circle cx="1273.65" cy="1199.18" r="6" fill="rgba(153,102,255,0.2)" stroke="rgb(153,102,255)" stroke-width="2"/><circle cx="1401.80" cy="1225.60" r="6" fill="rgba(153,102,255,0.2)" stroke="rgb(153,102,255)" stroke-width="2"/><rect x="1016.0" y="1100.0" width="79.0" height="24.0" fill="rgba(153,102,255,0.2)" stroke="rgb(153,102,255)" stroke-width="6"/><text x="1109.0" y="1118.8" fill="#3a3d42" stroke="#3a3d42" stroke-width="0.35" font-size="24">内存使用</text><g stroke="#e0e0e6" stroke-width="2"><line x1="1578.4" y1="1434.6" x2="2134.8" y2="1434.6"/><line x1="1578.4" y1="1386.2" x2="2134.8" y2="1386.2"/><line x1="1578.4" y1="1337.7" x2="2134.8" y2="1337.7"/><line x1="1578.4" y1="1289.3" x2="2134.8" y2="1289.3"/><line x1="1578.4" y1="1240.9" x2="2134.8" y2="1240.9"/><line x1="1578.4" y1="1192.4" x2="2134.8" y2="1192.4"/><line x1="1578.4" y1="1144.0" x2="2134.8" y2="1144.0"/><line x1="1594.4" y1="1144.0" x2="1594.4" y2="1450.6"/><line x1="1729.5" y1="1144.0" x2="1729.5" y2="1450.6"/><line x1="1864.6" y1="1144.0" x2="1864.6" y2="1450.6"/><line x1="1999.7" y1="1144.0" x2="1999.7" y2="1450.6"/><line x1="2134.8" y1="1144.0" x2="2134.8" y2="1450.6"/><line x1="1594.4" y1="1144.0" x2="1594.4" y2="1434.6"/><line x1="1594.4" y1="1434.6" x2="2134.8" y2="1434.6"/></g><g fill="#6b7280" stroke="#6b7280" stroke-width="0.3" font-size="24"><text x="1571.0" y="1444.1" text-anchor="end">0B</text><text x="1571.0" y="1395.7" text-anchor="end">500B</text><text x="1571.0" y="1347.2" text-anchor="end">1000B</text><text x="1571.0" y="1298.8" text-anchor="end">1.5KB</text><text x="1571.0" y="1250.4" text-anchor="end">2KB</text><text x="1571.0" y="1201.9" text-anchor="end">2.4KB</text><text x="1571.0" y="1153.5" text-anchor="end">2.9KB</text><text x="1594.4" y="1480.6" text-anchor="middle">12:36:41</text><text x="1729.5" y="1480.6" text-anchor="middle">12:36:41</text><text x="1864.6" y="1480.6" text-anchor="middle">12:36:41</text><text x="1999.7" y="1480.6" text-anchor="middle">12:36:41</text><text x="2134.8" y="1480.6" text-anchor="middle">12:36:41</text></g><path d="M1594.40 1223.70 C1648.44 1242.62 1682.81 1240.19 1729.50 1271.00 C1790.89 1311.51 1807.97 1396.51 1864.60 1402.00 C1916.05 1406.99 1947.93 1341.77 1999.70 1297.20 C2056.01 1248.73 2080.76 1220.52 2134.80 1169.40 L2134.80 1434.60 L1594.40 1434.60 Z" fill="rgba(54,162,235,0.2)"/><path d="M1594.40 1293.40 C1648.44 1300.28 1677.56 1296.07 1729.50 1310.60 C1785.64 1326.31 1810.17 1346.60 1864.60 1369.00 C1918.25 1391.08 1945.44 1421.14 1999.70 1421.80 C2053.52 1422.46 2080.76 1392.10 2134.80 1372.30 L2134.80 1434.60 L1594.40 1434.60 Z" fill="rgba(75,192,192,0.2)"/><path d="M1594.40 1223.70 C1648.44 1242.62 1682.81 1240.19 1729.50 1271.00 C1790.89 1311.51 1807.97 1396.51 1864.60 1402.00 C1916.05 1406.99 1947.93 1341.77 1999.70 1297.20 C2056.01 1248.73 2080.76 1220.52 2134.80 1169.40" fill="none" stroke="rgb(54,162,235)" stroke-width="6"/><path d="M1594.40 1293.40 C1648.44 1300.28 1677.56 1296.07 1729.50 1310.60 C1785.64 1326.31 1810.17 1346.60 1864.60 1369.00 C1918.25 1391.08 1945.44 1421.14 1999.70 1421.80 C2053.52 1422.46 2080.76 1392.10 2134.80 1372.30" fill="none" stroke="rgb(75,192,192)" stroke-width="6"/><circle cx="1594.40" cy="1223.70" r="6" fill="rgba(54,162,235,0.2)" stroke="rgb(54,162,235)" stroke-width="2"/><circle cx="1729.50" cy="1271.00" r="6" fill="rgba(54,162,235,0.2)" stroke="rgb(54,162,235)" stroke-width="2"/><circle cx="1864.60" cy="1402.00" r="6" fill="rgba(54,162,235,0.2)" stroke="rgb(54,162,235)" stroke-width="2"/><circle cx="1999.70" cy="1297.20" r="6" fill="rgba(54,162,235,0.2)" stroke="rgb(54,162,235)" stroke-width="2"/><circle cx="2134.80" cy="1169.40" r="6" fill="rgba(54,162,235,0.2)" stroke="rgb(54,162,235)" stroke-width="2"/><circle cx="1594.40" cy="1293.40" r="6" fill="rgba(75,192,192,0.2)" stroke="rgb(75,192,192)" stroke-width="2"/><circle cx="1729.50" cy="1310.60" r="6" fill="rgba(75,192,192,0.2)" stroke="rgb(75,192,192)" stroke-width="2"/><circle cx="1864.60" cy="1369.00" r="6" fill="rgba(75,192,192,0.2)" stroke="rgb(75,192,192)" stroke-width="2"/><circle cx="1999.70" cy="1421.80" r="6" fill="rgba(75,192,192,0.2)" stroke="rgb(75,192,192)" stroke-width="2"/><circle cx="2134.80" cy="1372.30" r="6" fill="rgba(75,192,192,0.2)" stroke="rgb(75,192,192)" stroke-width="2"/><rect x="1645.0" y="1100.0" width="79.0" height="24.0" fill="rgba(75,192,192,0.2)" stroke="rgb(75,192,192)" stroke-width="6"/><text x="1738.0" y="1118.8" fill="#3a3d42" stroke="#3a3d42" stroke-width="0.35" font-size="24">网络输入</text><rect x="1853.0" y="1100.0" width="78.0" height="24.0" fill="rgba(54,162,235,0.2)" stroke="rgb(54,162,235)" stroke-width="6"/><text x="1945.0" y="1118.8" fill="#3a3d42" stroke="#3a3d42" stroke-width="0.35" font-size="24">网络输出</text></svg></div><div id="frame"></div></body></html>
